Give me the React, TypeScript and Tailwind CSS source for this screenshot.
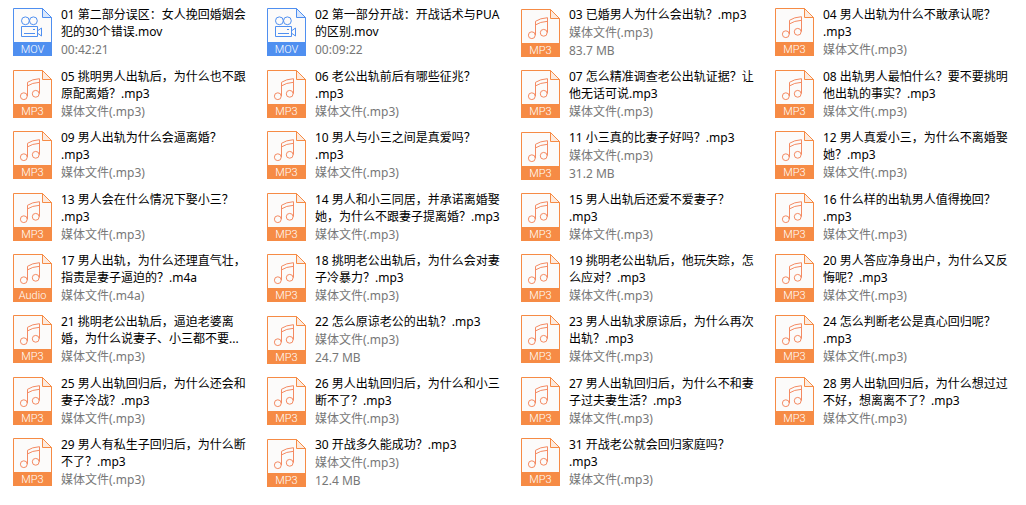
type FileKind = "MOV" | "MP3" | "Audio"

type MediaFile = {
  title: string
  details: string[]
  kind?: FileKind
}

const MP3 = ["媒体文件(.mp3)"]

const files: MediaFile[] = [
  { title: "01 第二部分误区：女人挽回婚姻会\n犯的30个错误.mov", details: ["00:42:21"], kind: "MOV" },
  { title: "02 第一部分开战：开战话术与PUA\n的区别.mov", details: ["00:09:22"], kind: "MOV" },
  { title: "03 已婚男人为什么会出轨？.mp3", details: [...MP3, "83.7 MB"] },
  { title: "04 男人出轨为什么不敢承认呢？\n.mp3", details: MP3 },
  { title: "05 挑明男人出轨后，为什么也不跟\n原配离婚？.mp3", details: MP3 },
  { title: "06 老公出轨前后有哪些征兆？\n.mp3", details: MP3 },
  { title: "07 怎么精准调查老公出轨证据？让\n他无话可说.mp3", details: MP3 },
  { title: "08 出轨男人最怕什么？要不要挑明\n他出轨的事实？.mp3", details: MP3 },
  { title: "09 男人出轨为什么会逼离婚？\n.mp3", details: MP3 },
  { title: "10 男人与小三之间是真爱吗？\n.mp3", details: MP3 },
  { title: "11 小三真的比妻子好吗？.mp3", details: [...MP3, "31.2 MB"] },
  { title: "12 男人真爱小三，为什么不离婚娶\n她？.mp3", details: MP3 },
  { title: "13 男人会在什么情况下娶小三？\n.mp3", details: MP3 },
  { title: "14 男人和小三同居，并承诺离婚娶\n她，为什么不跟妻子提离婚？.mp3", details: MP3 },
  { title: "15 男人出轨后还爱不爱妻子？\n.mp3", details: MP3 },
  { title: "16 什么样的出轨男人值得挽回？\n.mp3", details: MP3 },
  { title: "17 男人出轨，为什么还理直气壮，\n指责是妻子逼迫的？.m4a", details: ["媒体文件(.m4a)"], kind: "Audio" },
  { title: "18 挑明老公出轨后，为什么会对妻\n子冷暴力？.mp3", details: MP3 },
  { title: "19 挑明老公出轨后，他玩失踪，怎\n么应对？.mp3", details: MP3 },
  { title: "20 男人答应净身出户，为什么又反\n悔呢？.mp3", details: MP3 },
  { title: "21 挑明老公出轨后，逼迫老婆离\n婚，为什么说妻子、小三都不要...", details: MP3 },
  { title: "22 怎么原谅老公的出轨？.mp3", details: [...MP3, "24.7 MB"] },
  { title: "23 男人出轨求原谅后，为什么再次\n出轨？.mp3", details: MP3 },
  { title: "24 怎么判断老公是真心回归呢？\n.mp3", details: MP3 },
  { title: "25 男人出轨回归后，为什么还会和\n妻子冷战？.mp3", details: MP3 },
  { title: "26 男人出轨回归后，为什么和小三\n断不了？.mp3", details: MP3 },
  { title: "27 男人出轨回归后，为什么不和妻\n子过夫妻生活？.mp3", details: MP3 },
  { title: "28 男人出轨回归后，为什么想过过\n不好，想离离不了？.mp3", details: MP3 },
  { title: "29 男人有私生子回归后，为什么断\n不了？.mp3", details: MP3 },
  { title: "30 开战多久能成功？.mp3", details: [...MP3, "12.4 MB"] },
  { title: "31 开战老公就会回归家庭吗？\n.mp3", details: MP3 },
]

function Camera() {
  return (
    <>
      <circle cx="12.4" cy="12.8" r="3.9" />
      <circle cx="20.4" cy="12.8" r="3.9" />
      <path d="M8.5 18.5h16v10h-16zM11 25.5h11M20 21.5h2M25 22.5l3.5-2.5v8l-3.5-2.5" />
    </>
  )
}

function Note() {
  return (
    <g stroke="#f48a62">
      <circle cx="10.8" cy="26.2" r="3.4" />
      <circle cx="22.7" cy="23.8" r="3.4" />
      <path d="M14.5 26.2V12.3Q19 9.2 26.5 8.7V23.7M14.5 15.9Q19 12.8 26.5 12.3" />
    </g>
  )
}

function FileIcon({ kind }: { kind: FileKind }) {
  const isVideo = kind === "MOV"

  return (
    <div className={`w-[39px] shrink-0 ${isVideo ? "text-[#4f8ff0]" : "text-[#f68b45]"}`}>
      <svg className="block h-[34px] w-[39px]" viewBox="0 0 39 34" fill="none" stroke="currentColor">
        <path d="M.5 35V.5H29.5L38.5 9.5V35" fill="#fcfbfa" />
        <path d="M29.5 .5V9.5H38.5z" fill={isVideo ? "#dbe8fc" : "#fdebdf"} />
        {isVideo ? <Camera /> : <Note />}
      </svg>
      <div className="h-[14px] bg-current text-center font-[Roboto,sans-serif] text-[11px] leading-[15px] font-light">
        <span className="text-white">{kind}</span>
      </div>
    </div>
  )
}

function FileItem({ title, details, kind = "MP3" }: MediaFile) {
  return (
    <li className="flex items-center gap-[9px]">
      <FileIcon kind={kind} />
      <div className="min-w-0 flex-1">
        <p className="leading-[17px] whitespace-pre-line text-black">{title}</p>
        <div className="mt-px -mb-px leading-[18px] text-[#777777]">
          {details.map((detail) => (
            <p key={detail}>{detail}</p>
          ))}
        </div>
      </div>
    </li>
  )
}

export default function App() {
  return (
    <main className="min-h-screen bg-white pt-[6px] pr-[5px] pb-4 pl-[13px] font-['Noto_Sans','Noto_Sans_CJK_SC',sans-serif] text-xs">
      <ul className="grid grid-cols-4 items-start gap-x-2 gap-y-[9px]">
        {files.map((file) => (
          <FileItem key={file.title} {...file} />
        ))}
      </ul>
    </main>
  )
}
